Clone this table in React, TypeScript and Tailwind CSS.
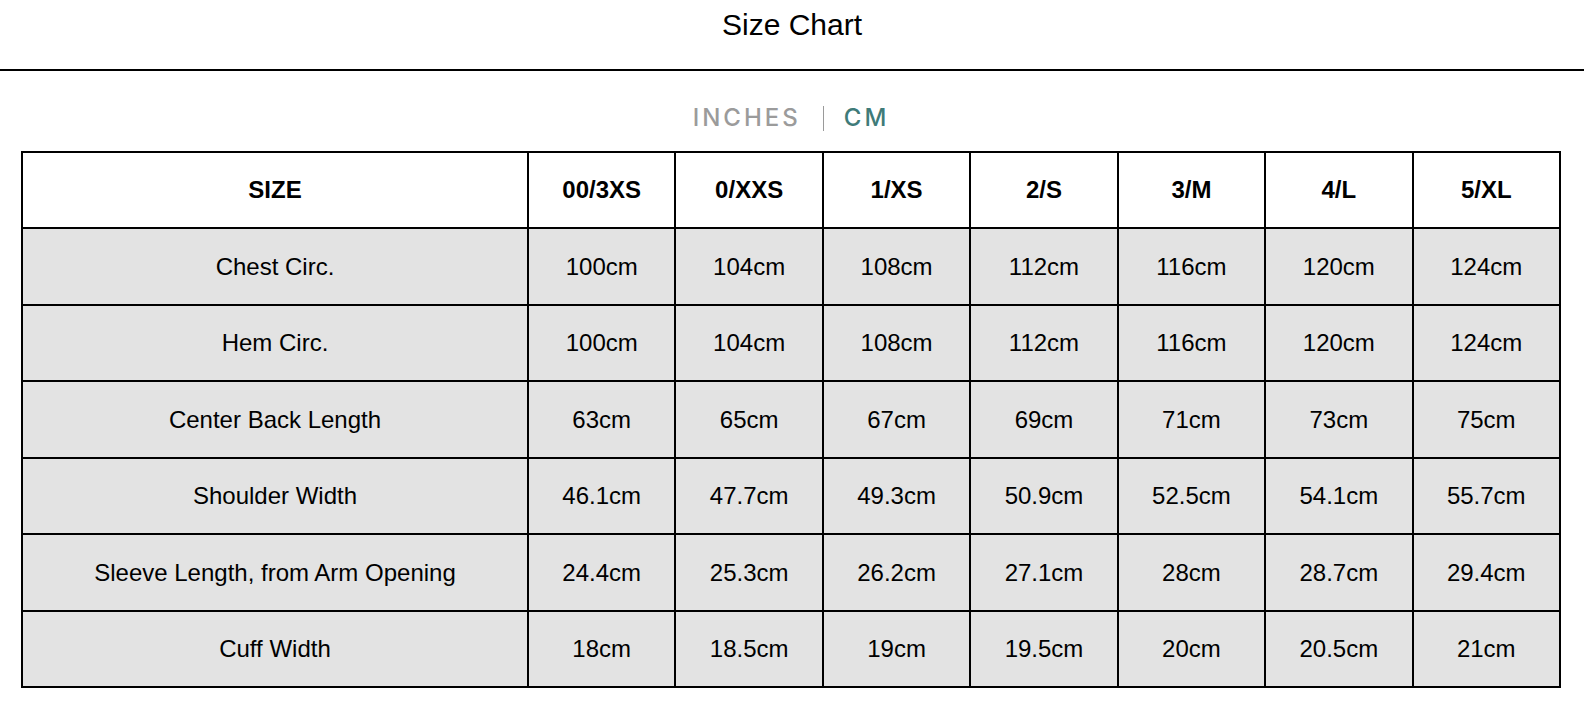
import React from 'react';

const sizes = ['00/3XS', '0/XXS', '1/XS', '2/S', '3/M', '4/L', '5/XL'];

const rows: { label: string; values: string[] }[] = [
    { label: 'Chest Circ.', values: ['100cm', '104cm', '108cm', '112cm', '116cm', '120cm', '124cm'] },
    { label: 'Hem Circ.', values: ['100cm', '104cm', '108cm', '112cm', '116cm', '120cm', '124cm'] },
    { label: 'Center Back Length', values: ['63cm', '65cm', '67cm', '69cm', '71cm', '73cm', '75cm'] },
    { label: 'Shoulder Width', values: ['46.1cm', '47.7cm', '49.3cm', '50.9cm', '52.5cm', '54.1cm', '55.7cm'] },
    { label: 'Sleeve Length, from Arm Opening', values: ['24.4cm', '25.3cm', '26.2cm', '27.1cm', '28cm', '28.7cm', '29.4cm'] },
    { label: 'Cuff Width', values: ['18cm', '18.5cm', '19cm', '19.5cm', '20cm', '20.5cm', '21cm'] },
];

// alternating heights so the grid lines land on a 76.5px pitch
const rowHeights = ['h-[77px]', 'h-[76px]', 'h-[77px]', 'h-[76px]', 'h-[77px]', 'h-[76px]'];

const App: React.FC = () => {
    return (
        <div className="min-h-screen bg-white text-black font-['Liberation_Sans',Arial,sans-serif]">
            {/* Titre */}
            <header className="h-[71px] border-b-2 border-black pt-[10px] text-center">
                <h1 className="text-[30px] leading-[30px]">Size Chart</h1>
            </header>

            {/* Unités */}
            <div className="mt-[35px] flex h-[25px] items-start justify-center pr-[2px] font-['Inter',sans-serif] font-medium">
                <button className="text-[24px] leading-[24px] tracking-[3px] text-[#9b9b9b]">
                    INCHES
                </button>
                <span className="ml-[22px] mr-[20px] h-[25px] w-px bg-[#9a9a9a]" />
                <button className="text-[24px] leading-[24px] tracking-[3px] text-[#3f7b79]">
                    CM
                </button>
            </div>

            {/* Tableau */}
            <div className="mt-[20px] pl-[21px]">
                <table className="w-[1540px] table-fixed border-collapse border-2 border-black text-center text-[24px]">
                    <colgroup>
                        <col className="w-[506px]" />
                        {sizes.map((s) => (
                            <col key={s} />
                        ))}
                    </colgroup>
                    <thead>
                        <tr className="h-[76px] bg-white">
                            <th className="border-2 border-black font-bold">SIZE</th>
                            {sizes.map((s) => (
                                <th key={s} className="border-2 border-black font-bold">
                                    {s}
                                </th>
                            ))}
                        </tr>
                    </thead>
                    <tbody>
                        {rows.map((row, i) => (
                            <tr key={row.label} className={`${rowHeights[i]} bg-[#e3e3e3]`}>
                                <td className="border-2 border-black">{row.label}</td>
                                {row.values.map((v, j) => (
                                    <td key={j} className="border-2 border-black">
                                        {v}
                                    </td>
                                ))}
                            </tr>
                        ))}
                    </tbody>
                </table>
            </div>
        </div>
    );
};

export default App;
